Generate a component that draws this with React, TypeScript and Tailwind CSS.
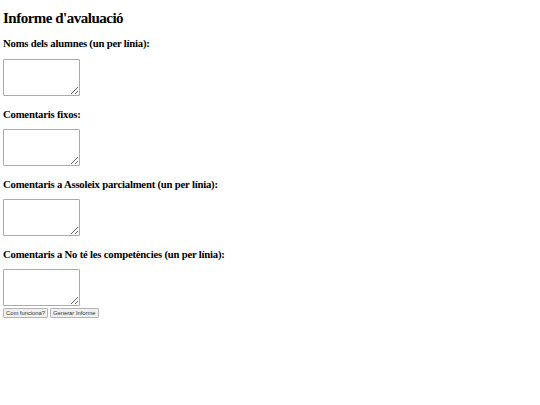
import React from "react";

function Field({ label, first }: { label: string; first?: boolean }) {
  return (
    <div className={first ? "flex flex-col mt-[10px]" : "flex flex-col mt-[12px]"}>
      <div className="text-[10.7px] font-bold leading-[12px] tracking-[-0.2px] text-black font-['Liberation_Serif',serif]">
        {label}
      </div>
      <textarea
        className={
          first
            ? "mt-[10px] w-[77px] h-[37px] border border-[#ababab] rounded-[1px] bg-white block"
            : "mt-[9px] w-[77px] h-[37px] border border-[#ababab] rounded-[1px] bg-white block"
        }
      />
    </div>
  );
}

export default function App() {
  return (
    <div className="w-[540px] h-[405px] bg-white px-[3px] pt-[9px] flex flex-col font-['Liberation_Serif',serif]">
      <h1 className="text-[15px] font-bold leading-[18px] tracking-[-0.5px] text-black font-['Liberation_Serif',serif]">
        Informe d'avaluació
      </h1>
      <Field label="Noms dels alumnes (un per línia):" first />
      <Field label="Comentaris fixos:" />
      <Field label="Comentaris a Assoleix parcialment (un per línia):" />
      <Field label="Comentaris a No té les competències (un per línia):" />
      <div className="flex gap-[2px] mt-[2px]">
        <button className="h-[10px] px-[2px] text-[5.8px] leading-[8px] border border-[#b5b5b5] rounded-[1px] bg-[#f0f0f0] text-[#333] font-['Liberation_Sans',Arial,sans-serif]">
          Com funciona?
        </button>
        <button className="h-[10px] px-[2px] text-[5.8px] leading-[8px] border border-[#b5b5b5] rounded-[1px] bg-[#f0f0f0] text-[#333] font-['Liberation_Sans',Arial,sans-serif]">
          Generar Informe
        </button>
      </div>
    </div>
  );
}
